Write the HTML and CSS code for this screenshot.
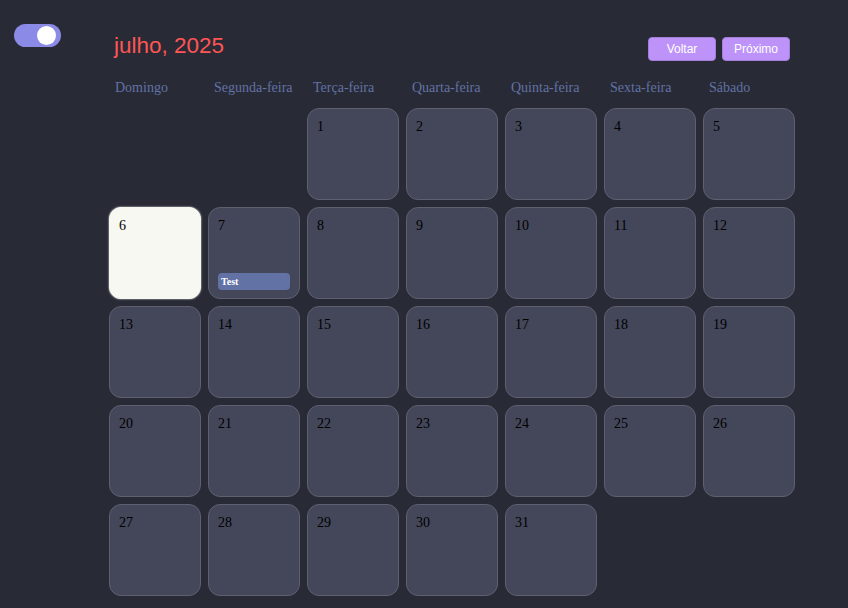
FILE: index.html
```html
<!DOCTYPE html>
<html lang="pt">
<head>
<meta charset="utf-8">
<title>Calendário</title>
<link rel="stylesheet" href="styles.css">
</head>
<body>
<aside class="sidebar">
  <div class="toggle"><span class="knob"></span></div>
</aside>
<main class="main">
  <header class="topbar">
    <h1 class="title">julho, 2025</h1>
    <div class="nav">
      <button class="btn">Voltar</button>
      <button class="btn">Próximo</button>
    </div>
  </header>
  <div class="weekdays">
    <div class="wd">Domingo</div>
    <div class="wd">Segunda-feira</div>
    <div class="wd">Terça-feira</div>
    <div class="wd">Quarta-feira</div>
    <div class="wd">Quinta-feira</div>
    <div class="wd">Sexta-feira</div>
    <div class="wd">Sábado</div>
  </div>
  <div class="grid">
    <div class="empty"></div>
    <div class="empty"></div>
    <div class="day"><span class="num">1</span></div>
    <div class="day"><span class="num">2</span></div>
    <div class="day"><span class="num">3</span></div>
    <div class="day"><span class="num">4</span></div>
    <div class="day"><span class="num">5</span></div>
    <div class="day today"><span class="num">6</span></div>
    <div class="day"><span class="num">7</span><div class="event">Test</div></div>
    <div class="day"><span class="num">8</span></div>
    <div class="day"><span class="num">9</span></div>
    <div class="day"><span class="num">10</span></div>
    <div class="day"><span class="num">11</span></div>
    <div class="day"><span class="num">12</span></div>
    <div class="day"><span class="num">13</span></div>
    <div class="day"><span class="num">14</span></div>
    <div class="day"><span class="num">15</span></div>
    <div class="day"><span class="num">16</span></div>
    <div class="day"><span class="num">17</span></div>
    <div class="day"><span class="num">18</span></div>
    <div class="day"><span class="num">19</span></div>
    <div class="day"><span class="num">20</span></div>
    <div class="day"><span class="num">21</span></div>
    <div class="day"><span class="num">22</span></div>
    <div class="day"><span class="num">23</span></div>
    <div class="day"><span class="num">24</span></div>
    <div class="day"><span class="num">25</span></div>
    <div class="day"><span class="num">26</span></div>
    <div class="day"><span class="num">27</span></div>
    <div class="day"><span class="num">28</span></div>
    <div class="day"><span class="num">29</span></div>
    <div class="day"><span class="num">30</span></div>
    <div class="day"><span class="num">31</span></div>
  </div>
</main>
</body>
</html>
```
FILE: styles.css
```css
* { box-sizing: border-box; }
html, body { height: 100%; }
body {
  margin: 0;
  background: #282a36;
  display: flex;
  align-items: flex-start;
  font-family: "Liberation Serif", serif;
  overflow: hidden;
}
.sidebar {
  width: 109px;
  flex: none;
  padding: 24px 0 0 14px;
}
.toggle {
  width: 47px;
  height: 23px;
  border-radius: 12px;
  background: #8b8ae6;
  display: flex;
  align-items: center;
  justify-content: flex-end;
  padding-right: 5px;
}
.knob {
  width: 19px;
  height: 19px;
  border-radius: 50%;
  background: #ffffff;
}
.main {
  width: 686px;
  flex: none;
  padding-top: 28px;
}
.topbar {
  display: flex;
  justify-content: space-between;
  align-items: flex-start;
  height: 44px;
}
.title {
  margin: 4px 0 0 5px;
  font-family: "Liberation Sans", Arial, sans-serif;
  font-weight: normal;
  font-size: 22.5px;
  line-height: 28px;
  color: #ff5555;
}
.nav {
  display: flex;
  gap: 6px;
  margin-top: 9px;
  margin-right: 5px;
}
.btn {
  width: 68px;
  height: 24px;
  padding: 0;
  border: 1px solid #a37fd8;
  border-radius: 4px;
  background: #bd93f9;
  color: #ffffff;
  font-family: "Liberation Sans", Arial, sans-serif;
  font-size: 12px;
}
.weekdays {
  display: grid;
  grid-template-columns: repeat(7, 92px);
  column-gap: 7px;
  height: 36px;
  padding-top: 8px;
}
.wd {
  padding-left: 6px;
  font-size: 14px;
  line-height: 16px;
  color: #6272a4;
}
.grid {
  display: grid;
  grid-template-columns: repeat(7, 92px);
  grid-auto-rows: 92px;
  gap: 7px;
}
.day {
  position: relative;
  border: 1px solid #5e6070;
  border-radius: 12px;
  background: #44475a;
  padding: 10px 9px;
}
.num {
  display: block;
  font-size: 14px;
  line-height: 16px;
  color: #000000;
}
.today {
  background: #f8f8f2;
  border-color: #f8f8f2;
  box-shadow: 0 0 2px #f8f8f2;
}
.event {
  position: absolute;
  left: 9px;
  right: 9px;
  bottom: 8px;
  height: 17px;
  border-radius: 4px;
  background: #6272a4;
  color: #ffffff;
  font-size: 10px;
  line-height: 17px;
  padding-left: 3px;
  font-weight: bold;
}
```
